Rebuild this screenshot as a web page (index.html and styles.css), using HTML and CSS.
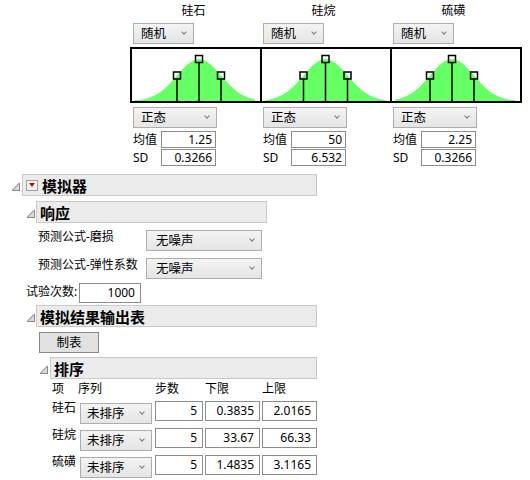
FILE: index.html
```html
<!DOCTYPE html>
<html lang="zh">
<head>
<meta charset="utf-8">
<title>模拟器</title>
<link rel="stylesheet" href="styles.css">
</head>
<body>
<div class="dists">
  <div class="dist">
    <div class="dist-title">硅石</div>
    <div class="combo combo-rand">随机</div>
    <div class="chart">
      <svg width="128" height="52" viewBox="0 0 128 52">
        <g transform="translate(67,0)">
          <path class="curve" d="M-64,52 L-64,51 L-60,51 L-56,50.4 L-52,49.4 L-48,48.1 L-44,46.3 L-40,44 L-36,41 L-32,37.4 L-28,33.3 L-24,28.8 L-20,24.2 L-16,19.8 L-12,15.8 L-8,12.7 L-4,10.7 L0,10 L4,10.7 L8,12.7 L12,15.8 L16,19.8 L20,24.2 L24,28.8 L28,33.3 L32,37.4 L36,41 L40,44 L44,46.3 L48,48.1 L52,49.4 L56,50.4 L56,52 Z"/>
          <g class="marks"><rect x="-3.5" y="6.5" width="7" height="7"/><rect x="-25.5" y="23" width="7" height="7"/><rect x="18.5" y="23" width="7" height="7"/><path d="M0,13.5V52M-22,30V52M22,30V52"/></g>
        </g>
      </svg>
    </div>
    <div class="combo combo-dist">正态</div>
    <div class="params">
      <div class="param"><span class="plabel">均值</span><span class="field">1.25</span></div>
      <div class="param"><span class="plabel">SD</span><span class="field">0.3266</span></div>
    </div>
  </div>
  <div class="dist">
    <div class="dist-title">硅烷</div>
    <div class="combo combo-rand">随机</div>
    <div class="chart">
      <svg width="128" height="52" viewBox="0 0 128 52">
        <g transform="translate(63.5,0)">
          <path class="curve" d="M-60,52 L-60,51 L-56,50.4 L-52,49.4 L-48,48.1 L-44,46.3 L-40,44 L-36,41 L-32,37.4 L-28,33.3 L-24,28.8 L-20,24.2 L-16,19.8 L-12,15.8 L-8,12.7 L-4,10.7 L0,10 L4,10.7 L8,12.7 L12,15.8 L16,19.8 L20,24.2 L24,28.8 L28,33.3 L32,37.4 L36,41 L40,44 L44,46.3 L48,48.1 L52,49.4 L56,50.4 L60,51 L60,52 Z"/>
          <g class="marks"><rect x="-3.5" y="6.5" width="7" height="7"/><rect x="-25.5" y="23" width="7" height="7"/><rect x="18.5" y="23" width="7" height="7"/><path d="M0,13.5V52M-22,30V52M22,30V52"/></g>
        </g>
      </svg>
    </div>
    <div class="combo combo-dist">正态</div>
    <div class="params">
      <div class="param"><span class="plabel">均值</span><span class="field">50</span></div>
      <div class="param"><span class="plabel">SD</span><span class="field">6.532</span></div>
    </div>
  </div>
  <div class="dist">
    <div class="dist-title">硫磺</div>
    <div class="combo combo-rand">随机</div>
    <div class="chart">
      <svg width="128" height="52" viewBox="0 0 128 52">
        <g transform="translate(60,0)">
          <path class="curve" d="M-57,52 L-57,50.7 L-56,50.4 L-52,49.4 L-48,48.1 L-44,46.3 L-40,44 L-36,41 L-32,37.4 L-28,33.3 L-24,28.8 L-20,24.2 L-16,19.8 L-12,15.8 L-8,12.7 L-4,10.7 L0,10 L4,10.7 L8,12.7 L12,15.8 L16,19.8 L20,24.2 L24,28.8 L28,33.3 L32,37.4 L36,41 L40,44 L44,46.3 L48,48.1 L52,49.4 L56,50.4 L60,51 L63,51 L63,52 Z"/>
          <g class="marks"><rect x="-3.5" y="6.5" width="7" height="7"/><rect x="-25.5" y="23" width="7" height="7"/><rect x="18.5" y="23" width="7" height="7"/><path d="M0,13.5V52M-22,30V52M22,30V52"/></g>
        </g>
      </svg>
    </div>
    <div class="combo combo-dist">正态</div>
    <div class="params">
      <div class="param"><span class="plabel">均值</span><span class="field">2.25</span></div>
      <div class="param"><span class="plabel">SD</span><span class="field">0.3266</span></div>
    </div>
  </div>
</div>

<div class="sim">
  <div class="head head-l1">
    <span class="twisty"></span>
    <div class="hbox hbox-sim"><span class="menu"></span>模拟器</div>
  </div>

  <div class="head head-l2 head-resp">
    <span class="twisty"></span>
    <div class="hbox hbox-resp">响应</div>
  </div>
  <div class="frow frow-first">
    <span class="flabel">预测公式-磨损</span>
    <div class="combo combo-noise">无噪声</div>
  </div>
  <div class="frow frow-second">
    <span class="flabel">预测公式-弹性系数</span>
    <div class="combo combo-noise">无噪声</div>
  </div>
  <div class="trials">
    <span class="tlabel">试验次数:</span>
    <span class="field field-trials">1000</span>
  </div>

  <div class="head head-l2 head-out">
    <span class="twisty"></span>
    <div class="hbox hbox-out">模拟结果输出表</div>
  </div>
  <div class="btn-row"><span class="btn">制表</span></div>

  <div class="head head-l3">
    <span class="twisty"></span>
    <div class="hbox hbox-sort">排序</div>
  </div>
  <div class="sort-table">
    <span class="th">项</span>
    <span class="th th-seq">序列</span>
    <span class="th">步数</span>
    <span class="th">下限</span>
    <span class="th">上限</span>

    <span class="tl">硅石</span>
    <div class="combo combo-sort">未排序</div>
    <span class="field cell">5</span>
    <span class="field cell">0.3835</span>
    <span class="field cell">2.0165</span>

    <span class="tl">硅烷</span>
    <div class="combo combo-sort">未排序</div>
    <span class="field cell">5</span>
    <span class="field cell">33.67</span>
    <span class="field cell">66.33</span>

    <span class="tl">硫磺</span>
    <div class="combo combo-sort">未排序</div>
    <span class="field cell">5</span>
    <span class="field cell">1.4835</span>
    <span class="field cell">3.1165</span>
  </div>
</div>
</body>
</html>
```
FILE: styles.css
```css
html, body {
  margin: 0;
  padding: 0;
  background: #ffffff;
}

body {
  font-family: "Noto Sans", "Noto Sans CJK SC", sans-serif;
  font-size: 12px;
  color: #000;
  overflow: hidden;
}

/* ---------- distribution columns ---------- */
.dists {
  display: flex;
  padding-left: 130px;
}

.dist {
  width: 130px;
  display: flex;
  flex-direction: column;
}

.dist-title {
  height: 23px;
  line-height: 22px;
  text-align: center;
  padding-right: 3px;
}

.combo {
  box-sizing: border-box;
  height: 21px;
  display: flex;
  align-items: center;
  justify-content: space-between;
  padding: 0 7px 0 7px;
  border: 1px solid #adadad;
  background: linear-gradient(#f3f3f3, #e5e5e5);
  font-size: 12.5px;
  line-height: 19px;
  white-space: nowrap;
}

.combo::after {
  content: "";
  width: 3px;
  height: 3px;
  border-right: 1.4px solid #7a7a7a;
  border-bottom: 1.4px solid #7a7a7a;
  transform: rotate(45deg);
  margin-top: -4px;
}

.combo-rand {
  width: 61px;
  margin-left: 3px;
}

.chart {
  margin-top: 3px;
  width: 128px;
  height: 52px;
  border: 2px solid #000;
  border-right: 0;
  background: #fff;
}

.dist:last-child .chart {
  border-right: 2px solid #000;
}

.chart svg {
  display: block;
}

.curve {
  fill: #66ff66;
}

.marks {
  fill: none;
  stroke: #000;
  stroke-width: 1.5;
}

.combo-dist {
  width: 84px;
  margin-left: 3px;
  margin-top: 4px;
}

.params {
  margin-top: 3px;
  display: flex;
  flex-direction: column;
  gap: 1px;
}

.param {
  display: flex;
  align-items: center;
  height: 17px;
  padding-left: 3px;
}

.plabel {
  width: 28px;
  line-height: 17px;
}

.field {
  box-sizing: border-box;
  display: block;
  border: 1px solid #8c8c8c;
  background: #fff;
  text-align: right;
  white-space: nowrap;
}

.param .field {
  width: 55px;
  height: 17px;
  line-height: 15px;
  padding-right: 3px;
}

/* ---------- outline sections ---------- */
.sim {
  margin-top: 8px;
  display: flex;
  flex-direction: column;
}

.head {
  display: flex;
  align-items: center;
}

.twisty {
  width: 8px;
  height: 8px;
  margin-top: 3px;
  background: linear-gradient(to top left, #d9d9d9 0%, #d9d9d9 50%, transparent 50%);
  border-right: 1px solid #8a8a8a;
  border-bottom: 1px solid #8a8a8a;
  box-sizing: border-box;
  position: relative;
}

.twisty::before {
  content: "";
  display: block;
  width: 10px;
  height: 1px;
  background: #9a9a9a;
  transform: translate(-1px, 3px) rotate(-45deg);
}

.hbox {
  box-sizing: border-box;
  height: 22px;
  display: flex;
  align-items: center;
  border: 1px solid #c9c9c9;
  background: #ebebeb;
  font-weight: bold;
  font-size: 15px;
  padding-left: 3px;
  white-space: nowrap;
}

.head-l1 {
  padding-left: 12px;
}

.head-l1 .hbox {
  margin-left: 2px;
  width: 295px;
}

.menu {
  box-sizing: border-box;
  width: 12px;
  height: 11px;
  margin-right: 4px;
  border: 1px solid #a3a3a3;
  background: linear-gradient(#ffffff, #eeeeee);
  display: flex;
  align-items: center;
  justify-content: center;
}

.menu::before {
  content: "";
  width: 0;
  height: 0;
  border-left: 3.5px solid transparent;
  border-right: 3.5px solid transparent;
  border-top: 4px solid #d40000;
}

.head-l2 {
  padding-left: 27px;
}

.head-l2 .hbox {
  margin-left: 1px;
}

.head-resp {
  margin-top: 5px;
}

.hbox-resp {
  width: 231px;
}

.frow {
  display: flex;
  align-items: flex-start;
  padding-left: 38px;
}

.frow-first {
  margin-top: 7px;
}

.frow-second {
  margin-top: 7px;
}

.flabel {
  width: 108px;
  line-height: 14px;
}

.combo-noise {
  width: 116px;
  padding-left: 9px;
}

.trials {
  display: flex;
  align-items: center;
  margin-top: 4px;
  padding-left: 26px;
}

.tlabel {
  width: 53px;
  line-height: 16px;
  margin-top: -2px;
}

.field-trials {
  width: 62px;
  height: 20px;
  line-height: 18px;
  padding-right: 5px;
}

.head-out {
  margin-top: 2px;
}

.hbox-out {
  width: 281px;
}

.btn-row {
  display: flex;
  margin-top: 5px;
  padding-left: 39px;
}

.btn {
  box-sizing: border-box;
  width: 60px;
  height: 21px;
  line-height: 19px;
  text-align: center;
  border: 1px solid #8a8a8a;
  background: #e1e1e1;
  font-size: 12.5px;
}

.head-l3 {
  margin-top: 4px;
  padding-left: 40px;
}

.head-l3 .hbox {
  margin-left: 2px;
  width: 267px;
}

/* ---------- sort table ---------- */
.sort-table {
  display: grid;
  grid-template-columns: 26px 73px 48px 55px 55px;
  grid-template-rows: 18px;
  grid-auto-rows: 23px;
  column-gap: 2px;
  row-gap: 4px;
  padding-left: 52px;
}

.th {
  line-height: 20px;
  white-space: nowrap;
}

.th-seq {
  margin-left: -2px;
}

.tl {
  line-height: 14px;
  white-space: nowrap;
}

.combo-sort {
  width: 72px;
  margin-top: 2px;
  padding-left: 6px;
}

.cell {
  height: 20px;
  line-height: 18px;
  padding-right: 5px;
}
```
